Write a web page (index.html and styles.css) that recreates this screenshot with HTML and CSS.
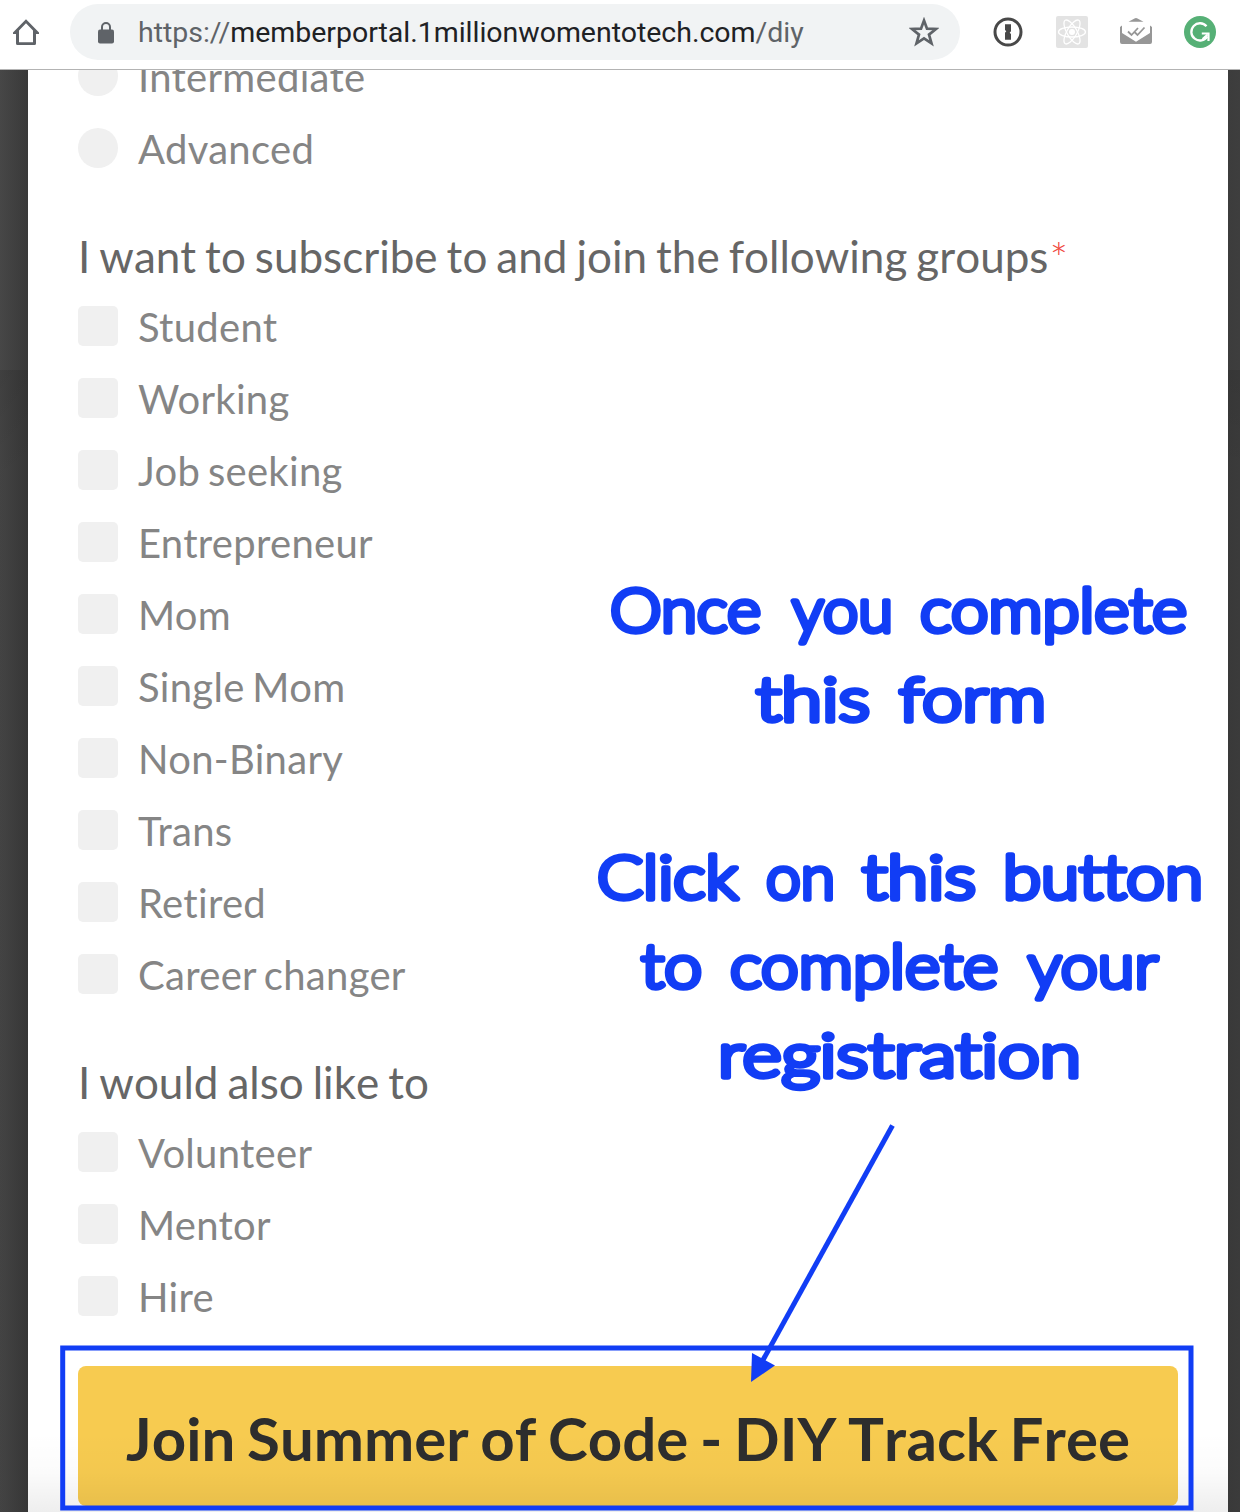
FILE: index.html
```html
<!DOCTYPE html>
<html lang="en">
<head>
<meta charset="utf-8">
<title>Join Summer of Code</title>
<link rel="stylesheet" href="styles.css">
</head>
<body>
<div class="window">
  <header class="toolbar">
    <svg class="home" width="28" height="28" viewBox="0 0 28 28"><path d="M1 14.500 14 1.200 27 14.500V16H24v9.500a1.500 1.500 0 0 1-1.500 1.500h-17A1.500 1.500 0 0 1 4 25.500V16H1zM14 5.300 7 12.500V24.200H21V12.500z" fill="#5f6368" fill-rule="evenodd"/></svg>
    <div class="address">
      <svg class="lock" width="16" height="22" viewBox="0 0 16 22"><rect x="0" y="7.500" width="16" height="14" rx="2" fill="#5f6368"/><path d="M4 8V5a4 4 0 0 1 8 0v3" fill="none" stroke="#5f6368" stroke-width="2"/></svg>
      <div class="url"><span>https://</span><span class="host">memberportal.1millionwomentotech.com</span><span>/diy</span></div>
      <svg class="star" width="30" height="30" viewBox="0 0 30 30"><path d="M15 3.500 18 11.600 27 12 20 17.600 22.500 26.300 15 21.300 7.500 26.300 10 17.600 3 12 12 11.600z" fill="none" stroke="#5f6368" stroke-width="2.700"/></svg>
    </div>
    <div class="extensions">
      <svg width="32" height="32" viewBox="0 0 32 32"><circle cx="16" cy="16" r="13" fill="#fff" stroke="#484848" stroke-width="3"/><path d="M13 8.300h6v7l-1.300 1.500 1.300 1.300v5.600h-6v-7l1.300-1.500L13 14z" fill="#484848"/></svg>
      <svg width="32" height="32" viewBox="0 0 32 32"><rect width="32" height="32" rx="2" fill="#e3e3e3"/><g fill="none" stroke="#fff" stroke-width="1.300"><ellipse cx="16" cy="16" rx="13.500" ry="5"/><ellipse cx="16" cy="16" rx="13.500" ry="5" transform="rotate(60 16 16)"/><ellipse cx="16" cy="16" rx="13.500" ry="5" transform="rotate(120 16 16)"/></g><circle cx="16" cy="16" r="3" fill="#fff"/></svg>
      <svg width="32" height="32" viewBox="0 0 32 32"><path d="M8.500 5.700 14.500 2.500Q16 1.700 17.500 2.500L23.500 5.700zM0 11 2 9.500V17L16 25.800 30 17V9.500L32 11V26a2 2 0 0 1-2 2H2a2 2 0 0 1-2-2z" fill="#979797"/><path d="m8 15.500 3.500 3.500 6.500-7M14.500 16l3 3 7-7.500" fill="none" stroke="#979797" stroke-width="1.800"/></svg>
      <svg width="32" height="32" viewBox="0 0 32 32"><circle cx="16" cy="16" r="16" fill="#56b076"/><path d="M22.500 10.300A8.600 8.600 0 1 0 23.300 20.300" fill="none" stroke="#fff" stroke-width="2.300"/><path d="M17.800 17.500H24.500V25" fill="none" stroke="#fff" stroke-width="2.200"/><path d="m18.500 23 5-4.500" stroke="#fff" stroke-width="1.800"/></svg>
    </div>
  </header>
  <main class="backdrop">
    <form class="panel">
      <div class="options scrolled">
        <label class="option"><i class="box radio"></i>Intermediate</label>
        <label class="option"><i class="box radio"></i>Advanced</label>
      </div>
      <h2 class="question">I want to subscribe to and join the following groups<sup class="required">*</sup></h2>
      <div class="options">
        <label class="option"><i class="box"></i>Student</label>
        <label class="option"><i class="box"></i>Working</label>
        <label class="option"><i class="box"></i>Job seeking</label>
        <label class="option"><i class="box"></i>Entrepreneur</label>
        <label class="option"><i class="box"></i>Mom</label>
        <label class="option"><i class="box"></i>Single Mom</label>
        <label class="option"><i class="box"></i>Non-Binary</label>
        <label class="option"><i class="box"></i>Trans</label>
        <label class="option"><i class="box"></i>Retired</label>
        <label class="option"><i class="box"></i>Career changer</label>
      </div>
      <h2 class="question">I would also like to</h2>
      <div class="options">
        <label class="option"><i class="box"></i>Volunteer</label>
        <label class="option"><i class="box"></i>Mentor</label>
        <label class="option"><i class="box"></i>Hire</label>
      </div>
      <button class="join" type="button">Join Summer of Code - DIY Track Free</button>
      <div class="fade"></div>
    </form>
  </main>
  <svg class="annotation" width="1240" height="1512" viewBox="0 0 1240 1512">
    <rect x="62.700" y="1348" width="1128.300" height="160" fill="none" stroke="#113df5" stroke-width="5"/>
    <path d="M892.500 1125.500 763 1360" stroke="#113df5" stroke-width="5"/>
    <path d="M751 1382 752 1353 775 1365.500z" fill="#113df5"/>
    <g class="note">
      <text y="632"><tspan x="610" textLength="151" lengthAdjust="spacingAndGlyphs">Once</tspan> <tspan x="792" textLength="101" lengthAdjust="spacingAndGlyphs">you</tspan> <tspan x="920" textLength="267" lengthAdjust="spacingAndGlyphs">complete</tspan></text>
      <text y="721"><tspan x="756" textLength="114" lengthAdjust="spacingAndGlyphs">this</tspan> <tspan x="899" textLength="147" lengthAdjust="spacingAndGlyphs">form</tspan></text>
      <text y="899"><tspan x="597" textLength="141" lengthAdjust="spacingAndGlyphs">Click</tspan> <tspan x="766" textLength="69" lengthAdjust="spacingAndGlyphs">on</tspan> <tspan x="862" textLength="114" lengthAdjust="spacingAndGlyphs">this</tspan> <tspan x="1003" textLength="200" lengthAdjust="spacingAndGlyphs">button</tspan></text>
      <text y="988"><tspan x="641" textLength="61" lengthAdjust="spacingAndGlyphs">to</tspan> <tspan x="730" textLength="268" lengthAdjust="spacingAndGlyphs">complete</tspan> <tspan x="1028" textLength="130" lengthAdjust="spacingAndGlyphs">your</tspan></text>
      <text y="1077"><tspan x="718" textLength="363" lengthAdjust="spacingAndGlyphs">registration</tspan></text>
    </g>
  </svg>
</div>
</body>
</html>
```
FILE: styles.css
```css
* { box-sizing: border-box; }
body { margin: 0; font-family: Lato, sans-serif; background: #fff; }
.window { position: relative; width: 1240px; height: 1512px; overflow: hidden; display: flex; flex-direction: column; }

.toolbar { flex: none; height: 70px; display: flex; align-items: flex-start; padding: 4px 24px 0 12px; background: #fff; border-bottom: 1px solid #b3b3b3; }
.home { flex: none; margin-top: 14px; }
.address { flex: none; width: 890px; height: 56px; margin-left: 30px; padding: 0 21px 0 28px; display: flex; align-items: center; border-radius: 28px; background: #f1f3f4; }
.lock { flex: none; margin-top: 1px; }
.url { flex: 1; margin-left: 24px; padding-top: 1px; font: 28.5px/56px Roboto, sans-serif; letter-spacing: -.02px; color: #5f6368; white-space: nowrap; }
.host { color: #202124; }
.star { flex: none; }
.extensions { display: flex; gap: 32px; margin: 12px 0 0 32px; }
.extensions svg { flex: none; }

.backdrop { flex: 1; min-height: 0; overflow: hidden; padding: 0 12px 0 28px; background: linear-gradient(rgba(0,0,0,0) 300px, rgba(0,0,0,.1) 300px, rgba(0,0,0,.05) 400px), linear-gradient(90deg, #474747, #393939 28px, #3c3c3c 1228px, #3e3e3e); }
.panel { position: relative; height: 100%; padding: 0 50px; overflow: hidden; background: #fff; font-variant-ligatures: none; }
.options { display: flex; flex-direction: column; gap: 32px; }
.scrolled { margin-top: -14px; }
.option { display: flex; align-items: flex-start; gap: 20px; height: 40px; font-size: 40px; line-height: 43px; letter-spacing: .3px; word-spacing: -.07em; color: #858585; white-space: nowrap; }
.box { flex: none; width: 40px; height: 40px; border-radius: 5px; background: #f0f0f0; }
.radio { border-radius: 50%; }
.question { margin: 65px 0 29px; font-size: 44px; line-height: 46px; height: 44px; font-weight: 400; color: #666; white-space: nowrap; font-kerning: none; word-spacing: -.051em; }
.required { margin-left: 1px; font-size: 44px; line-height: 0; color: #f04a3e; vertical-align: -2px; font-weight: 300; }
.join { display: block; width: 1100px; height: 140px; margin-top: 50px; padding: 3px 0 0; border: 0; border-radius: 8px; background: #f7cb50; color: #2d2d2d; font: 700 60px/72px Lato, sans-serif; font-kerning: none; word-spacing: -.048em; white-space: nowrap; }
.fade { position: absolute; left: 0; right: 0; bottom: 0; height: 80px; background: linear-gradient(rgba(0,0,0,0), rgba(0,0,0,.015) 50%, rgba(0,0,0,.065)); }

.annotation { position: absolute; left: 0; top: 0; }
.note text { font-family: "Comic Sans MS", Lato, sans-serif; font-weight: 300; font-size: 62px; font-variant-ligatures: none; fill: #113df5; stroke: #113df5; stroke-width: 5.5px; stroke-linejoin: round; }
```
